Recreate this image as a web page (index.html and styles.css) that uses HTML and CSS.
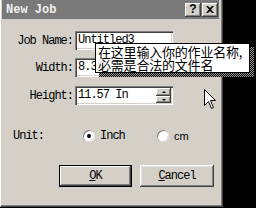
FILE: index.html
```html
<!DOCTYPE html>
<html>
<head>
<meta charset="utf-8">
<link rel="stylesheet" href="styles.css">
</head>
<body>
<div class="screen">
  <div class="dialog">
    <div class="titlebar">
      <span class="title">New Job</span>
      <div class="tbtns">
        <span class="tbtn q">?</span>
        <span class="tbtn"><svg width="8" height="7" viewBox="0 0 8 7"><path d="M0 0h2l2 2 2-2h2L5 3.5 8 7H6L4 5 2 7H0l3-3.5z" fill="#000"/></svg></span>
      </div>
    </div>
    <div class="form">
      <div class="row"><label>Job Name:</label><div class="field">Untitled3</div></div>
      <div class="row"><label>Width:</label><div class="field">8.3<div class="spinner"><span class="up"></span><span class="down"></span></div></div></div>
      <div class="row r3"><label>Height:</label><div class="field">11.57 In<div class="spinner"><span class="up"></span><span class="down"></span></div></div></div>
      <div class="unitrow">
        <span class="lbl">Unit:</span>
        <span class="opt"><span class="radio checked"></span><span>Inch</span></span>
        <span class="opt"><span class="radio"></span><span class="sans">cm</span></span>
      </div>
      <div class="btnrow">
        <button class="btn default"><u>O</u>K</button>
        <button class="btn"><u>C</u>ancel</button>
      </div>
    </div>
  </div>
  <div class="tipshadow"></div>
  <div class="tooltip">在这里输入你的作业名称,<br>必需是合法的文件名</div>
  <svg class="cursor" width="13" height="21" viewBox="0 0 13 21"><path d="M0.5 0.5 L0.5 16.5 L4.5 12.5 L7.5 19.5 L9.5 18.5 L6.5 11.5 L11.5 11.5 Z" fill="#fff" stroke="#000" stroke-width="1"/></svg>
</div>
</body>
</html>
```
FILE: styles.css
```css
* { box-sizing: border-box; }
html, body { margin: 0; padding: 0; background: #000; }
.screen {
  position: relative;
  width: 256px;
  height: 208px;
  background: #000;
  overflow: hidden;
  font-family: "Liberation Mono", monospace;
  font-size: 12px;
  letter-spacing: -1px;
  color: #000;
}
.dialog {
  width: 223px;
  height: 207px;
  background: #d4d0c8;
  border-left: 1px solid #fff;
  border-right: 1px solid #404040;
  border-bottom: 1px solid #404040;
  box-shadow: inset -1px -1px #808080;
  display: flex;
  flex-direction: column;
}
.titlebar {
  height: 19px;
  margin: 0 3px 0 1px;
  background: #7a7a7a;
  display: flex;
  align-items: center;
  justify-content: space-between;
  padding: 0 1px 0 4px;
}
.title {
  color: #f0f0f0;
  font-weight: bold;
  font-size: 12px;
  letter-spacing: 0;
}
.tbtns { display: flex; gap: 1px; }
.tbtn {
  width: 16px;
  height: 14px;
  background: #d4d0c8;
  box-shadow: inset -1px -1px #404040, inset 1px 1px #fff, inset -2px -2px #808080;
  display: flex;
  align-items: center;
  justify-content: center;
  padding-bottom: 1px;
}
.tbtn.q {
  font-family: "Liberation Sans", sans-serif;
  font-weight: bold;
  font-size: 12px;
  letter-spacing: 0;
}
.form {
  display: flex;
  flex-direction: column;
  padding-top: 12px;
}
.row {
  display: grid;
  grid-template-columns: 72px 98px;
  column-gap: 2px;
  align-items: center;
  height: 19px;
  margin-bottom: 8px;
}
.row.r3 { margin-top: 1px; }
.row label { text-align: right; }
.field {
  position: relative;
  height: 19px;
  background: #fff;
  box-shadow: inset 1px 1px #808080, inset 2px 2px #404040, inset -1px -1px #fff, inset -2px -2px #d4d0c8;
  padding-left: 3px;
  line-height: 19px;
}
.spinner {
  position: absolute;
  right: 2px;
  top: 2px;
  width: 15px;
  height: 15px;
  display: flex;
  flex-direction: column;
}
.spinner span {
  flex: 1;
  background: #d4d0c8;
  box-shadow: inset -1px -1px #404040, inset 1px 1px #fff, inset -2px -2px #808080;
  position: relative;
}
.spinner span::after {
  content: "";
  position: absolute;
  left: 6px;
  top: 3px;
  border-left: 2px solid transparent;
  border-right: 2px solid transparent;
}
.spinner .up::after { border-bottom: 2px solid #000; }
.spinner .down::after { border-top: 2px solid #000; }
.unitrow {
  display: grid;
  grid-template-columns: 70px 74px auto;
  align-items: center;
  padding-left: 12px;
  height: 14px;
  margin-top: 16px;
}
.opt { display: flex; align-items: center; gap: 5px; }
.radio {
  width: 12px;
  height: 12px;
  border-radius: 50%;
  background: #fff;
  box-shadow: inset 1px 1px #808080, inset -1px -1px #dfdfdf;
  position: relative;
}
.radio.checked::after {
  content: "";
  position: absolute;
  left: 4px;
  top: 4px;
  width: 4px;
  height: 4px;
  border-radius: 50%;
  background: #000;
}
.sans {
  font-family: "Liberation Sans", sans-serif;
  font-size: 11px;
  letter-spacing: 0;
}
.btnrow {
  display: flex;
  gap: 8px;
  padding-left: 58px;
  margin-top: 22px;
}
.btn {
  width: 74px;
  height: 22px;
  background: #d4d0c8;
  border: 0;
  padding: 0;
  font: inherit;
  letter-spacing: -1px;
  color: #000;
  box-shadow: inset -1px -1px #404040, inset 1px 1px #fff, inset -2px -2px #808080, inset 2px 2px #dfdfdf;
}
.btn.default {
  width: 73px;
  border: 1px solid #000;
  box-shadow: inset -1px -1px #404040, inset 1px 1px #fff, inset -2px -2px #808080;
}
.tipshadow {
  position: absolute;
  left: 99px;
  top: 47px;
  width: 155px;
  height: 30px;
  background: repeating-conic-gradient(#000 0 25%, #9a9a9a 0 50%) 0 0 / 2px 2px;
}
.tooltip {
  position: absolute;
  left: 95px;
  top: 43px;
  width: 155px;
  height: 30px;
  background: #fff;
  border: 1px solid #000;
  font-family: "Noto Sans CJK SC", sans-serif;
  font-size: 13px;
  letter-spacing: -0.2px;
  line-height: 13px;
  padding: 1px 0 0 2px;
  white-space: nowrap;
  overflow: hidden;
}
.cursor {
  position: absolute;
  left: 204px;
  top: 89px;
}
```
